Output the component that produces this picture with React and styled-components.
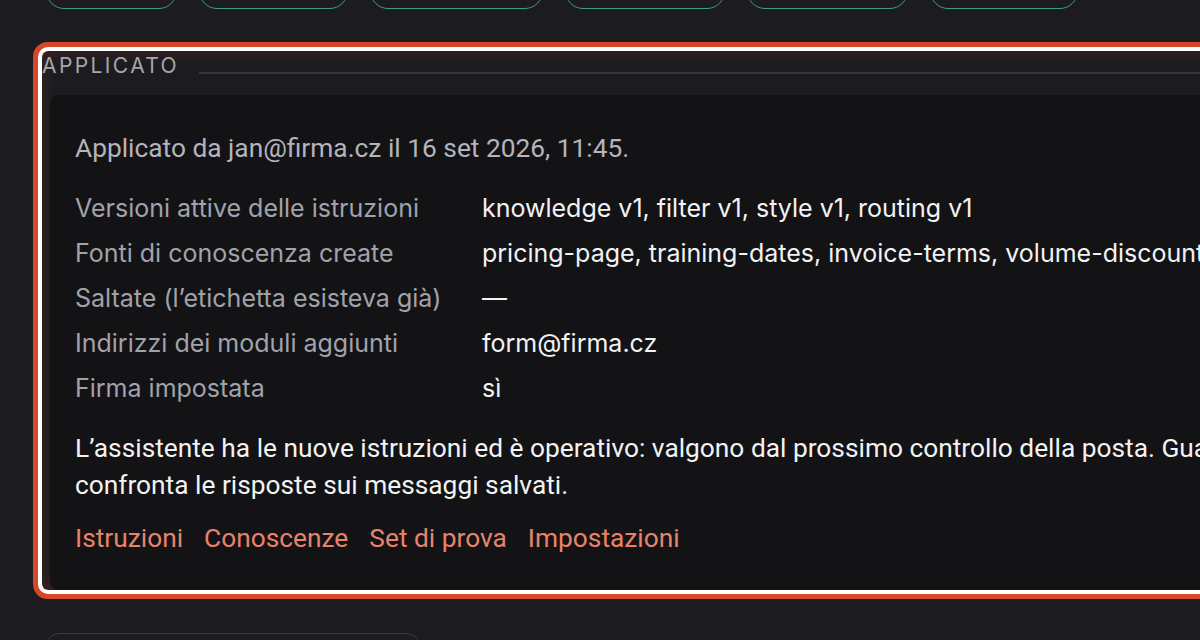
import styled, { createGlobalStyle } from 'styled-components';

const GlobalStyle = createGlobalStyle`
  html, body {
    margin: 0;
    padding: 0;
    background: #1c1c20;
  }
  body {
    font-family: Inter, 'Noto Sans', sans-serif;
    color: #f0f0f2;
  }
`;

const filters = [131, 149, 173, 160, 161, 148];

const details = [
  { label: 'Versioni attive delle istruzioni', value: 'knowledge v1, filter v1, style v1, routing v1' },
  { label: 'Fonti di conoscenza create', value: 'pricing-page, training-dates, invoice-terms, volume-discounts' },
  { label: 'Saltate (l’etichetta esisteva già)', value: '—' },
  { label: 'Indirizzi dei moduli aggiunti', value: 'form@firma.cz' },
  { label: 'Firma impostata', value: 'sì' },
];

const links = ['Istruzioni', 'Conoscenze', 'Set di prova', 'Impostazioni'];

const Viewport = styled.div`
  width: 1200px;
  height: 640px;
  overflow: hidden;
`;

const Page = styled.div`
  width: 1600px;
  padding: 0 0 0 42px;
  box-sizing: border-box;
`;

const FilterBar = styled.div`
  display: flex;
  gap: 22px;
  margin: -32px 0 0 4px;
`;

const FilterPill = styled.button`
  width: ${(p) => p.$w}px;
  height: 41px;
  border: 1.5px solid #3f9f73;
  border-radius: 18px;
  background: transparent;
  padding: 0;
`;

const Section = styled.section`
  margin-top: 42px;
  border-radius: 6px;
  box-shadow:
    0 0 0 4px #ffffff,
    0 0 0 9px #d9472b,
    inset 0 0 16px rgba(217, 71, 43, 0.22);
`;

const Legend = styled.div`
  display: flex;
  align-items: center;
  height: 44px;
  gap: 20px;
`;

const LegendText = styled.span`
  font-family: Inter, sans-serif;
  font-size: 21px;
  letter-spacing: 2.4px;
  color: #a6a6ae;
  line-height: 1;
  margin-top: -16px;
`;

const LegendRule = styled.div`
  flex: 1;
  height: 2px;
  background: #34343a;
  margin-top: -1px;
`;

const Card = styled.div`
  margin-left: 8px;
  background: #131316;
  border-radius: 8px;
  padding: 36px 0 33px 25px;
`;

const Meta = styled.p`
  margin: 0 0 21px;
  font-family: Roboto, sans-serif;
  font-size: 26.3px;
  line-height: 34px;
  color: #b4b4bc;
`;

const DetailGrid = styled.dl`
  display: grid;
  grid-template-columns: 407px 1fr;
  margin: 0 0 19px;
  font-family: Inter, sans-serif;
  font-size: 25px;
  line-height: 45px;
`;

const Term = styled.dt`
  color: #a2a2aa;
  white-space: nowrap;
`;

const Value = styled.dd`
  margin: 0;
  color: #f2f2f4;
  white-space: nowrap;
`;

const Note = styled.p`
  margin: 0 0 16px;
  width: 1440px;
  font-family: Roboto, sans-serif;
  font-size: 26.3px;
  line-height: 37px;
  color: #f2f2f2;
`;

const LinkRow = styled.nav`
  display: flex;
  gap: 21px;
`;

const ActionLink = styled.a`
  font-family: Roboto, sans-serif;
  font-size: 26.3px;
  line-height: 37px;
  color: #e8836a;
  text-decoration: none;
  cursor: pointer;
`;

const NextPanel = styled.div`
  margin: 43px 0 0 2px;
  width: 376px;
  height: 60px;
  border: 1.5px solid #3a3a40;
  border-radius: 16px;
`;

export default function App() {
  return (
    <Viewport>
      <GlobalStyle />
      <Page>
        <FilterBar>
          {filters.map((w, i) => (
            <FilterPill key={i} $w={w} aria-label={`filtro ${i + 1}`} />
          ))}
        </FilterBar>

        <Section>
          <Legend>
            <LegendText>APPLICATO</LegendText>
            <LegendRule />
          </Legend>
          <Card>
            <Meta>Applicato da jan@firma.cz il 16 set 2026, 11:45.</Meta>
            <DetailGrid>
              {details.map((d) => [
                <Term key={`${d.label}-t`}>{d.label}</Term>,
                <Value key={`${d.label}-v`}>{d.value}</Value>,
              ])}
            </DetailGrid>
            <Note>
              L’assistente ha le nuove istruzioni ed è operativo: valgono dal prossimo controllo della
              posta. Guarda il set di prova e confronta le risposte sui messaggi salvati.
            </Note>
            <LinkRow>
              {links.map((l) => (
                <ActionLink key={l}>{l}</ActionLink>
              ))}
            </LinkRow>
          </Card>
        </Section>

        <NextPanel />
      </Page>
    </Viewport>
  );
}
